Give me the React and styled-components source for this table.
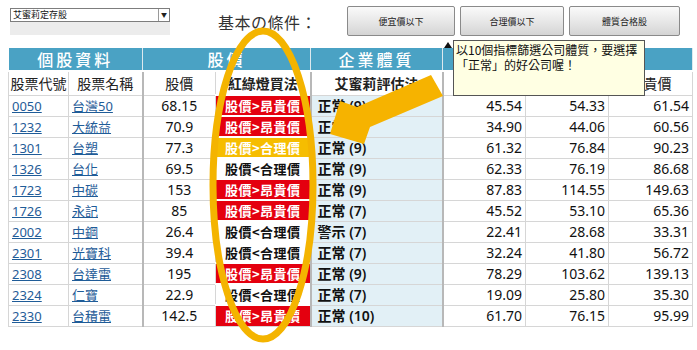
import React from "react";
import styled, { createGlobalStyle } from "styled-components";

const GlobalStyle = createGlobalStyle`
  html, body {
    margin: 0;
    padding: 0;
    background: #fff;
  }
  body {
    font-family: "Noto Sans", "Noto Sans CJK TC", sans-serif;
  }
`;

const Page = styled.div`
  position: relative;
  width: 697px;
  height: 350px;
  overflow: hidden;
  background: #fff;
`;

const TopBar = styled.div`
  display: flex;
  align-items: flex-start;
  height: 48px;
  padding-left: 10px;
`;

const Picker = styled.div`
  margin-top: 8px;
  width: 160px;
`;

const SelectBox = styled.div`
  display: flex;
  align-items: center;
  justify-content: space-between;
  height: 12px;
  border: 1px solid #7d7d7d;
  background: #fff;
  font-family: "Noto Sans CJK TC", sans-serif;
  font-size: 9px;
  line-height: 12px;
  color: #111;
  padding-left: 2px;
`;

const DropBtn = styled.span`
  width: 10px;
  height: 12px;
  border-left: 1px solid #9a9a9a;
  display: flex;
  align-items: center;
  justify-content: center;
  font-size: 6px;
  color: #222;
`;

const PickerShade = styled.div`
  height: 13px;
  background: #ececec;
`;

const Title = styled.div`
  width: 129px;
  margin-left: 48px;
  margin-top: 10px;
  font-family: "Noto Sans CJK TC", sans-serif;
  font-size: 16px;
  letter-spacing: 0.5px;
  color: #333;
`;

const Buttons = styled.div`
  display: flex;
  gap: 5px;
  margin-top: 6px;
`;

const Button = styled.div`
  width: ${(p) => p.$w}px;
  height: 30px;
  box-sizing: border-box;
  border: 1px solid #8a8a8a;
  border-radius: 2px;
  background: linear-gradient(#fafafa, #e6e6e6 55%, #d4d4d4);
  display: flex;
  align-items: center;
  justify-content: center;
  font-family: "Noto Sans CJK TC", sans-serif;
  font-size: 9px;
  color: #222;
`;

const Table = styled.table`
  margin-left: 8px;
  border-collapse: collapse;
  table-layout: fixed;
  width: 684px;
  font-family: "Noto Sans", "Noto Sans CJK TC", sans-serif;
`;

const GroupHead = styled.th`
  height: 22px;
  padding: 0;
  background: #4aa2c4;
  color: #fff;
  font-family: "Noto Sans CJK TC", sans-serif;
  font-weight: 500;
  font-size: 16px;
  line-height: 20px;
  letter-spacing: 3px;
  border-right: 1px solid #dde9ee;
  border-bottom: 2px solid #fff;
`;

const ColHead = styled.th`
  height: 22px;
  padding: 0;
  background: #fff;
  color: #222;
  font-family: "Noto Sans CJK TC", sans-serif;
  font-weight: ${(p) => (p.$bold ? 700 : 400)};
  font-size: 14px;
  line-height: 20px;
  white-space: nowrap;
  overflow: hidden;
  border: 1px solid #d6d6d6;
  border-right: ${(p) => (p.$thick ? "2px solid #b8b8b8" : "1px solid #d6d6d6")};
`;

const Row = styled.tr`
  height: 21px;
`;

const Cell = styled.td`
  padding: 0 3px;
  font-size: 14px;
  line-height: 19px;
  color: #111;
  text-align: ${(p) => p.$align || "left"};
  border: 1px solid #d6d6d6;
  border-right: ${(p) => (p.$thick ? "2px solid #b8b8b8" : "1px solid #d6d6d6")};
  background: ${(p) => p.$bg || "#fff"};
  white-space: nowrap;
  overflow: hidden;
`;

const Link = styled.a`
  color: #1f5c98;
  text-decoration: underline;
  font-size: 13px;
  font-family: "Noto Sans", "Noto Sans CJK TC", sans-serif;
`;

const signalColors = {
  high: { bg: "#e4000f", fg: "#fff" },
  mid: { bg: "#f6bd00", fg: "#fff" },
  low: { bg: "#fff", fg: "#111" },
};

const Signal = styled.td`
  padding: 0;
  border-top: 2px solid #fff;
  border-bottom: 1px solid #d6d6d6;
  border-right: 2px solid #b8b8b8;
  background: ${(p) => signalColors[p.$kind].bg};
  color: ${(p) => signalColors[p.$kind].fg};
  font-family: "Noto Sans CJK TC", sans-serif;
  font-weight: 700;
  font-size: 13px;
  line-height: 18px;
  text-align: center;
  letter-spacing: 0.5px;
  white-space: nowrap;
`;

const Health = styled(Cell)`
  font-family: "Noto Sans", "Noto Sans CJK TC", sans-serif;
  font-weight: 600;
  padding-left: 6px;
`;

const Tooltip = styled.div`
  position: absolute;
  left: 453px;
  top: 40px;
  width: 192px;
  height: 56px;
  box-sizing: border-box;
  border: 1px solid #555;
  background: #ffffe3;
  padding: 1px 0 0 2px;
  font-family: "Noto Sans CJK TC", sans-serif;
  font-size: 12px;
  line-height: 15px;
  color: #111;
  white-space: nowrap;
  &::before {
    content: "";
    position: absolute;
    left: -10px;
    top: 1px;
    border-left: 4px solid transparent;
    border-right: 4px solid transparent;
    border-bottom: 6px solid #111;
  }
`;

const Overlay = styled.svg`
  position: absolute;
  left: 0;
  top: 0;
  pointer-events: none;
`;

const rows = [
  ["0050", "台灣50", "68.15", "high", "正常 (9)", "45.54", "54.33", "61.54"],
  ["1232", "大統益", "70.9", "high", "正常 (9)", "34.90", "44.06", "60.56"],
  ["1301", "台塑", "77.3", "mid", "正常 (9)", "61.32", "76.84", "90.23"],
  ["1326", "台化", "69.5", "low", "正常 (9)", "62.33", "76.19", "86.68"],
  ["1723", "中碳", "153", "high", "正常 (9)", "87.83", "114.55", "149.63"],
  ["1726", "永記", "85", "high", "正常 (7)", "45.52", "53.10", "65.36"],
  ["2002", "中鋼", "26.4", "low", "警示 (7)", "22.41", "28.68", "33.31"],
  ["2301", "光寶科", "39.4", "low", "正常 (7)", "32.24", "41.80", "56.72"],
  ["2308", "台達電", "195", "high", "正常 (9)", "78.29", "103.62", "139.13"],
  ["2324", "仁寶", "22.9", "low", "正常 (7)", "19.09", "25.80", "35.30"],
  ["2330", "台積電", "142.5", "high", "正常 (10)", "61.70", "76.15", "95.99"],
];

const signalText = {
  high: "股價>昂貴價",
  mid: "股價>合理價",
  low: "股價<合理價",
};

const widths = [60, 74, 73, 95, 132, 83, 83, 84];

export default function App() {
  return (
    <Page>
      <GlobalStyle />
      <TopBar>
        <Picker>
          <SelectBox>
            艾蜜莉定存股
            <DropBtn>▼</DropBtn>
          </SelectBox>
          <PickerShade />
        </Picker>
        <Title>基本の條件：</Title>
        <Buttons>
          <Button $w={108}>便宜價以下</Button>
          <Button $w={104}>合理價以下</Button>
          <Button $w={111}>體質合格股</Button>
        </Buttons>
      </TopBar>

      <Table>
        <colgroup>
          {widths.map((w, i) => (
            <col key={i} style={{ width: w }} />
          ))}
        </colgroup>
        <thead>
          <tr>
            <GroupHead colSpan={2}>個股資料</GroupHead>
            <GroupHead colSpan={2}>股價</GroupHead>
            <GroupHead>企業體質</GroupHead>
            <GroupHead colSpan={3}>合理價格</GroupHead>
          </tr>
          <tr>
            <ColHead>股票代號</ColHead>
            <ColHead $thick>股票名稱</ColHead>
            <ColHead>股價</ColHead>
            <ColHead $bold $thick>紅綠燈買法</ColHead>
            <ColHead $bold $thick>艾蜜莉評估法</ColHead>
            <ColHead>便宜價</ColHead>
            <ColHead>合理價</ColHead>
            <ColHead>昂貴價</ColHead>
          </tr>
        </thead>
        <tbody>
          {rows.map((r) => (
            <Row key={r[0]}>
              <Cell>
                <Link href="#">{r[0]}</Link>
              </Cell>
              <Cell $thick>
                <Link href="#">{r[1]}</Link>
              </Cell>
              <Cell $align="center">{r[2]}</Cell>
              <Signal $kind={r[3]}>{signalText[r[3]]}</Signal>
              <Health $bg="#e2f0f6" $thick>
                {r[4]}
              </Health>
              <Cell $align="right">{r[5]}</Cell>
              <Cell $align="right">{r[6]}</Cell>
              <Cell $align="right">{r[7]}</Cell>
            </Row>
          ))}
        </tbody>
      </Table>

      <Overlay width="697" height="350" viewBox="0 0 697 350">
        <ellipse
          cx="263"
          cy="185"
          rx="50"
          ry="154"
          fill="none"
          stroke="#f4b400"
          strokeWidth="7"
        />
        <polygon
          points="431,75 443,96 370,127 364,144 330,134 340,101 357,107"
          fill="#f6b300"
        />
      </Overlay>

      <Tooltip>
        以10個指標篩選公司體質，要選擇
        <br />
        「正常」的好公司喔！
      </Tooltip>
    </Page>
  );
}
